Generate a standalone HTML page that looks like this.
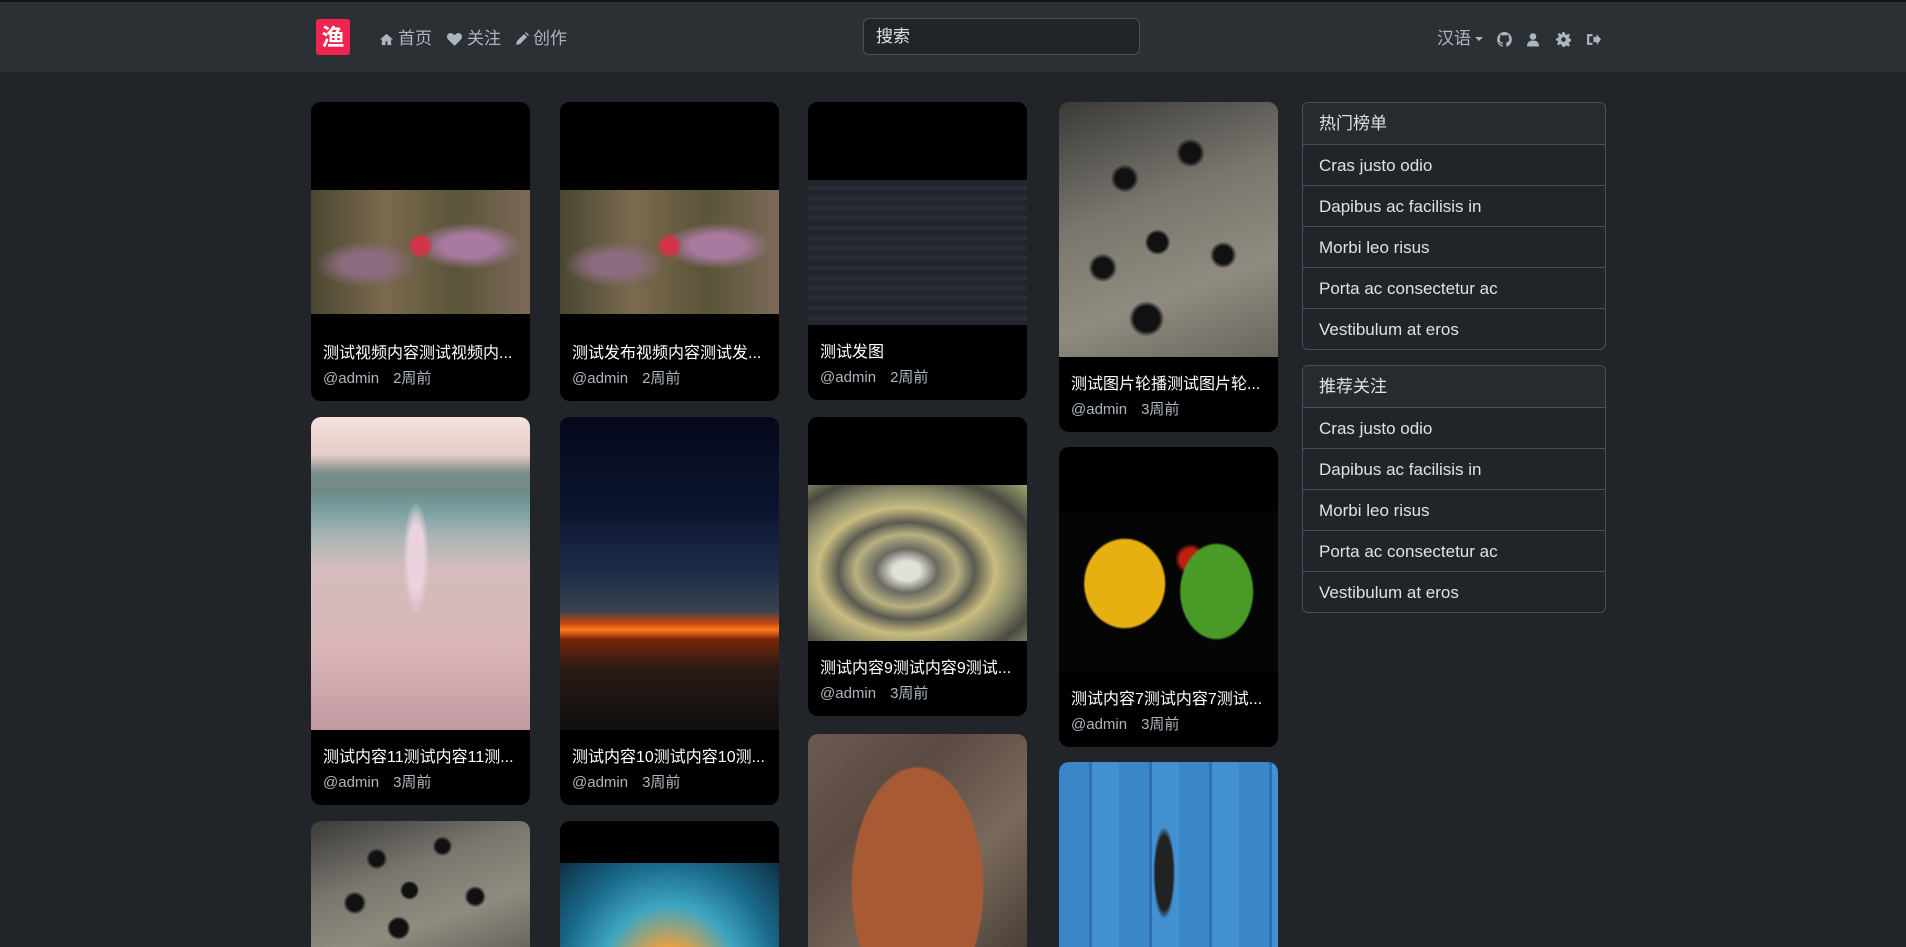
<!DOCTYPE html>
<html><head><meta charset="utf-8">
<style>
*{box-sizing:border-box;margin:0;padding:0}
html,body{width:1906px;height:947px;overflow:hidden;background:#212529;font-family:"Liberation Sans","Noto Sans CJK SC",sans-serif;color:#dee2e6}
#wrap{position:relative;width:1906px;height:947px;overflow:hidden}
.topline{position:absolute;left:0;top:0;width:1906px;height:2px;background:#111}
.nav{position:absolute;left:0;top:2px;width:1906px;height:70px;background:#2b3035}
.logo{position:absolute;left:316px;top:17px;width:34px;height:36px;background:#f0254f;border-radius:3px;color:#fff;font-size:23px;font-weight:bold;text-align:center;line-height:36px}
.ni{position:absolute;top:25px;font-size:17px;color:#adb5bd;line-height:24px;display:flex;align-items:center;gap:4px}
.ni svg{fill:#adb5bd}
.search{position:absolute;left:863px;top:16px;width:277px;height:37px;border:1px solid #495057;border-radius:6px;background:#212529;color:#dee2e6;font-size:17px;line-height:35px;padding-left:12px}
.ic{position:absolute;top:30px}
.ic svg{fill:#adb5bd}
.card{position:absolute;width:219px;background:#000;border-radius:10px;overflow:hidden}
.media{position:relative;width:100%;overflow:hidden;background:#000}
.media div{position:absolute;left:0;width:100%}
.body{height:75px;padding:16px 12px 0}
.t{color:#fff;font-size:16px;line-height:24px;white-space:nowrap;overflow:hidden}
.m{color:#adb5bd;font-size:15px;line-height:24px;margin-top:1px}
.m span{margin-left:14px}
.panel{position:absolute;left:1302px;width:304px;border:1px solid #495057;border-radius:6px;overflow:hidden;background:#212529}
.panel div{height:41px;line-height:41px;border-top:1px solid #495057;padding-left:16px;font-size:17px;color:#dee2e6}
.panel div:first-child{border-top:none;background:#272b30}
.crowd{background:radial-gradient(circle at 30% 30%,#111 0 4%,transparent 6%),radial-gradient(circle at 60% 20%,#111 0 4%,transparent 6%),radial-gradient(circle at 45% 55%,#111 0 5%,transparent 7%),radial-gradient(circle at 75% 60%,#111 0 4%,transparent 6%),radial-gradient(circle at 40% 85%,#111 0 5%,transparent 7%),radial-gradient(circle at 20% 65%,#111 0 4%,transparent 6%),linear-gradient(160deg,#3a3a38,#7a776e 40%,#8f8b80 70%,#6a665e)}
</style></head><body><div id="wrap">
<div class="topline"></div>
<div class="nav">
<div class="logo">渔</div>
<div class="ni" style="left:379px"><svg width="15" height="13" viewBox="0 0 16 14"><path d="M8 1L1 7h2v6h4V9h2v4h4V7h2z"/></svg>首页</div>
<div class="ni" style="left:446px"><svg width="17" height="15" viewBox="0 0 16 14"><path d="M8 13L2 7C0 5 1 1 4 1c2 0 3 1 4 2 1-1 2-2 4-2 3 0 4 4 2 6z"/></svg>关注</div>
<div class="ni" style="left:515px"><svg width="14" height="14" viewBox="0 0 14 14"><path d="M1 13l1-4 7-7 3 3-7 7zM10 1l1-1 3 3-1 1z"/></svg>创作</div>
<div class="search">搜索</div>
<div class="ni" style="left:1437px">汉语<svg width="8" height="6" viewBox="0 0 8 6"><path d="M0 1h8L4 5z"/></svg></div>
<div class="ic" style="left:1497px"><svg width="15" height="15" viewBox="0 0 14 14"><path d="M7 0a7 7 0 0 0-2.2 13.6c.3 0 .5-.2.5-.4v-1.3c-2 .4-2.4-.9-2.4-.9-.3-.8-.8-1-.8-1-.6-.4.1-.4.1-.4.7 0 1.1.7 1.1.7.6 1.1 1.6.8 2 .6 0-.5.2-.8.4-1-1.6-.2-3.2-.8-3.2-3.5 0-.8.3-1.400.7-1.9 0-.2-.3-.9.1-1.9 0 0 .6-.2 1.9.7a6.6 6.6 0 0 1 3.5 0c1.3-.9 1.9-.7 1.9-.7.4 1 .1 1.7.1 1.9.4.5.7 1.1.7 1.9 0 2.7-1.6 3.3-3.2 3.5.3.2.5.7.5 1.3v2c0 .2.2.4.5.4A7 7 0 0 0 7 0z"/></svg></div>
<div class="ic" style="left:1527px"><svg width="12" height="15" viewBox="0 0 12 14"><circle cx="6" cy="4" r="3.3"/><path d="M0 14c0-4 2-6 6-6s6 2 6 6z"/></svg></div>
<div class="ic" style="left:1556px"><svg width="15" height="15" viewBox="0 0 14 14"><path d="M6 0h2l.4 2 1.6.7 1.7-1.2 1.4 1.4-1.2 1.7.7 1.6 2 .4v2l-2 .4-.7 1.6 1.2 1.7-1.4 1.4-1.7-1.2-1.6.7L8 14H6l-.4-2-1.6-.7-1.7 1.2-1.4-1.4 1.2-1.7L1.4 8 0 8V6l2-.4.7-1.6-1.2-1.7 1.4-1.4 1.7 1.2L5.6 2zM7 4.8a2.2 2.2 0 1 0 0 4.4 2.2 2.2 0 0 0 0-4.4z"/></svg></div>
<div class="ic" style="left:1586px"><svg width="15" height="15" viewBox="0 0 14 14"><path d="M1 2h5v2H3v6h3v2H1zM7 4.5h3V2l4 5-4 5V9.5H7z"/></svg></div>
</div>

<!-- col1 -->
<div class="card" style="left:311px;top:102px"><div class="media" style="height:224px"><div style="top:88px;height:124px;background:radial-gradient(circle at 50% 45%,#d2344a 0 6%,transparent 10%),radial-gradient(ellipse at 72% 45%,#a87aa0 0 12%,transparent 24%),radial-gradient(ellipse at 25% 60%,#8c6c80 0 10%,transparent 22%),linear-gradient(90deg,#4a4630,#7a6a50,#5a5438,#7b6a58)"></div></div><div class="body"><div class="t">测试视频内容测试视频内...</div><div class="m">@admin<span>2周前</span></div></div></div>
<div class="card" style="left:311px;top:417px"><div class="media" style="height:313px"><div style="top:0;height:313px;background:radial-gradient(ellipse 6% 18% at 48% 45%,#e9d2dc 0 60%,transparent 100%),linear-gradient(180deg,#f7e1dc 0,#e4ccc8 12%,#7a8c88 18%,#6e8a88 24%,#7ca0a2 30%,#a8b4b4 38%,#d4bcbc 48%,#d9b5b8 75%,#c19aa0 100%)"></div></div><div class="body"><div class="t">测试内容11测试内容11测...</div><div class="m">@admin<span>3周前</span></div></div></div>
<div class="card crowd" style="left:311px;top:821px;height:126px;border-bottom-left-radius:0;border-bottom-right-radius:0"></div>
<!-- col2 -->
<div class="card" style="left:560px;top:102px"><div class="media" style="height:224px"><div style="top:88px;height:124px;background:radial-gradient(circle at 50% 45%,#d2344a 0 6%,transparent 10%),radial-gradient(ellipse at 72% 45%,#a87aa0 0 12%,transparent 24%),radial-gradient(ellipse at 25% 60%,#8c6c80 0 10%,transparent 22%),linear-gradient(90deg,#4a4630,#7a6a50,#5a5438,#7b6a58)"></div></div><div class="body"><div class="t">测试发布视频内容测试发...</div><div class="m">@admin<span>2周前</span></div></div></div>
<div class="card" style="left:560px;top:417px"><div class="media" style="height:313px"><div style="top:0;height:313px;background:linear-gradient(180deg,#05081a 0,#0c1530 30%,#1e2e48 50%,#3a4250 62%,#c64a10 66%,#ff7a1a 68%,#7a2608 71%,#2a1a14 80%,#0f0e10 100%)"></div></div><div class="body"><div class="t">测试内容10测试内容10测...</div><div class="m">@admin<span>3周前</span></div></div></div>
<div class="card" style="left:560px;top:821px;height:126px;border-bottom-left-radius:0;border-bottom-right-radius:0"><div class="media" style="height:126px"><div style="top:42px;height:84px;background:radial-gradient(ellipse at 50% 140%,#e8a040 0 20%,#3ea6c0 45%,#1a6a8a 70%,#0d2f44 100%)"></div></div></div>
<!-- col3 -->
<div class="card" style="left:808px;top:102px"><div class="media" style="height:223px"><div style="top:78px;height:145px;background:repeating-linear-gradient(180deg,#23262e 0 6px,#2a2d36 6px 10px);"></div></div><div class="body"><div class="t">测试发图</div><div class="m">@admin<span>2周前</span></div></div></div>
<div class="card" style="left:808px;top:417px"><div class="media" style="height:224px"><div style="top:68px;height:156px;background:radial-gradient(ellipse at 45% 55%,#e0e0d8 0 8%,#6a6a62 18%,#b8b080 30%,#5a5a50 40%,#c8bc80 52%,#8a8a6a 66%,#4a4a40 80%,#a0a870 100%)"></div></div><div class="body"><div class="t">测试内容9测试内容9测试...</div><div class="m">@admin<span>3周前</span></div></div></div>
<div class="card" style="left:808px;top:734px;height:213px;border-bottom-left-radius:0;border-bottom-right-radius:0"><div class="media" style="height:213px"><div style="top:0;height:213px;background:radial-gradient(ellipse 33% 62% at 50% 72%,#a85a34 0 90%,transparent 92%),linear-gradient(135deg,#6b5a50,#5a4a42,#7a6a5a,#4a4038)"></div></div></div>
<!-- col4 -->
<div class="card" style="left:1059px;top:102px"><div class="media crowd" style="height:255px"></div><div class="body"><div class="t">测试图片轮播测试图片轮...</div><div class="m">@admin<span>3周前</span></div></div></div>
<div class="card" style="left:1059px;top:447px"><div class="media" style="height:225px"><div style="top:64px;height:161px;background:radial-gradient(ellipse 20% 30% at 30% 45%,#e6b010 0 90%,transparent 95%),radial-gradient(ellipse 18% 32% at 72% 50%,#4a9a28 0 90%,transparent 95%),radial-gradient(circle at 60% 30%,#c02010 0 6%,transparent 9%),#050505"></div></div><div class="body"><div class="t">测试内容7测试内容7测试...</div><div class="m">@admin<span>3周前</span></div></div></div>
<div class="card" style="left:1059px;top:762px;height:185px;border-bottom-left-radius:0;border-bottom-right-radius:0"><div class="media" style="height:185px"><div style="top:0;height:185px;background:radial-gradient(ellipse 5% 25% at 48% 60%,#222 0 80%,transparent 100%),repeating-linear-gradient(90deg,#3a86c8 0 30px,#2e70ae 30px 33px,#4290d0 33px 60px)"></div></div></div>

<div class="panel" style="top:102px"><div>热门榜单</div><div>Cras justo odio</div><div>Dapibus ac facilisis in</div><div>Morbi leo risus</div><div>Porta ac consectetur ac</div><div>Vestibulum at eros</div></div>
<div class="panel" style="top:365px"><div>推荐关注</div><div>Cras justo odio</div><div>Dapibus ac facilisis in</div><div>Morbi leo risus</div><div>Porta ac consectetur ac</div><div>Vestibulum at eros</div></div>
</div></body></html>
